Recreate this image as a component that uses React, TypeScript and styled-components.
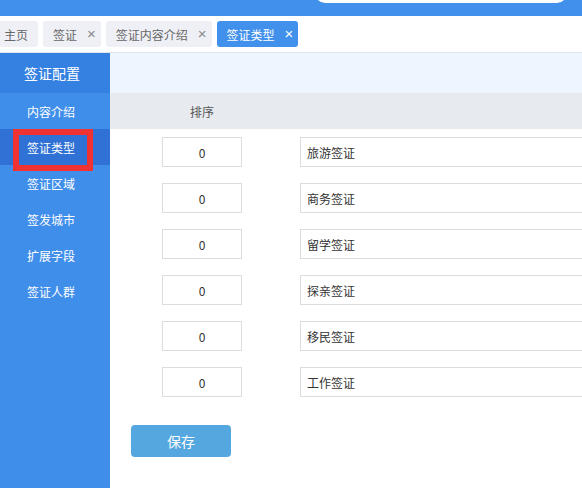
import React from 'react'
import styled, { createGlobalStyle } from 'styled-components'

const GlobalStyle = createGlobalStyle`
  html, body {
    margin: 0;
    padding: 0;
    background: #fff;
    font-family: "Noto Sans CJK SC", "Liberation Sans", sans-serif;
    overflow: hidden;
  }
`

const Page = styled.div`
  width: 582px;
  height: 488px;
  display: flex;
  flex-direction: column;
  position: relative;
  overflow: hidden;
`

const TopBar = styled.div`
  height: 16px;
  flex: none;
  background: #4190eb;
  display: flex;
  align-items: flex-start;
  overflow: hidden;
`

const TopTitle = styled.div`
  margin: -18px 0 0 10px;
  width: 240px;
  font-size: 15px;
  line-height: 18px;
  font-weight: bold;
  color: #5a6270;
  white-space: nowrap;
  overflow: hidden;
`

const Search = styled.div`
  margin: -20px 0 0 65px;
  width: 252px;
  height: 23px;
  background: #fff;
  border-radius: 0 0 10px 10px;
`

const TabBar = styled.div`
  flex: none;
  display: flex;
  align-items: center;
  gap: 5px;
  border-bottom: 1px solid #dfe4ed;
  box-sizing: border-box;
  height: 37px;
`

const Tab = styled.div<{ active?: boolean; first?: boolean }>`
  height: 26px;
  display: flex;
  align-items: center;
  gap: 10px;
  padding-left: 10px;
  margin-left: ${({ first }) => (first ? '-6px' : '0')};
  padding-right: ${({ first }) => (first ? '10px' : '5px')};
  border-radius: 3px;
  font-size: 12px;
  background: ${({ active }) => (active ? '#4190eb' : '#eff0f6')};
  color: ${({ active }) => (active ? '#fff' : '#666')};
`

const Close = styled.span<{ active?: boolean }>`
  font-family: "Liberation Sans", sans-serif;
  font-size: 15px;
  line-height: 26px;
  color: ${({ active }) => (active ? '#fff' : '#888')};
`

const Body = styled.div`
  flex: 1;
  display: flex;
`

const Sidebar = styled.div`
  width: 110px;
  flex: none;
  background: #3f8eea;
  display: flex;
  flex-direction: column;
`

const SideHead = styled.div`
  height: 40px;
  background: #3581e2;
  color: #fff;
  font-size: 14px;
  display: flex;
  align-items: center;
  padding-left: 24px;
`

const SideItem = styled.div<{ active?: boolean }>`
  height: 36px;
  display: flex;
  align-items: center;
  padding-left: 27px;
  color: #fff;
  font-size: 12px;
  background: ${({ active }) => (active ? '#2f71d5' : 'transparent')};
`

const Main = styled.div`
  flex: 1;
  display: flex;
  flex-direction: column;
  min-width: 0;
`

const TopBand = styled.div`
  height: 40px;
  background: #eef5fe;
`

const TableHead = styled.div`
  height: 36px;
  background: #e7eaef;
  display: grid;
  grid-template-columns: 184px 1fr;
  align-items: center;
  font-size: 12px;
  color: #555;
`

const HeadCell = styled.div`
  text-align: center;
`

const Rows = styled.div`
  padding-top: 8px;
  display: flex;
  flex-direction: column;
  gap: 16px;
`

const Row = styled.div`
  display: grid;
  grid-template-columns: 184px 1fr;
  align-items: center;
`

const Field = styled.div<{ center?: boolean }>`
  height: 30px;
  box-sizing: border-box;
  border: 1px solid #dcdcdc;
  font-size: 12px;
  color: #333;
  display: flex;
  align-items: center;
  justify-content: ${({ center }) => (center ? 'center' : 'flex-start')};
  padding-left: ${({ center }) => (center ? '0' : '6px')};
`

const SortField = styled(Field)`
  width: 80px;
  justify-self: center;
`

const NameField = styled(Field)`
  width: 400px;
  margin-left: 6px;
`

const Footer = styled.div`
  padding: 28px 0 0 21px;
`

const SaveButton = styled.button`
  width: 100px;
  height: 32px;
  border: none;
  border-radius: 4px;
  background: #55a7df;
  color: #fff;
  font-size: 14px;
  font-family: inherit;
`

const Marker = styled.div`
  position: absolute;
  left: 13px;
  top: 129px;
  width: 80px;
  height: 42px;
  box-sizing: border-box;
  border: 6px solid #f03232;
`

const tabs = [
  { label: '主页', closable: false },
  { label: '签证', closable: true },
  { label: '签证内容介绍', closable: true },
  { label: '签证类型', closable: true, active: true },
]

const menu = ['内容介绍', '签证类型', '签证区域', '签发城市', '扩展字段', '签证人群']

const types = ['旅游签证', '商务签证', '留学签证', '探亲签证', '移民签证', '工作签证']

export default function App() {
  return (
    <Page>
      <GlobalStyle />
      <TopBar>
        <TopTitle>旅游签证管理后台系统管理平台</TopTitle>
        <Search />
      </TopBar>
      <TabBar>
        {tabs.map((t, i) => (
          <Tab key={t.label} active={t.active} first={i === 0}>
            {t.label}
            {t.closable && <Close active={t.active}>×</Close>}
          </Tab>
        ))}
      </TabBar>
      <Body>
        <Sidebar>
          <SideHead>签证配置</SideHead>
          {menu.map((m) => (
            <SideItem key={m} active={m === '签证类型'}>
              {m}
            </SideItem>
          ))}
        </Sidebar>
        <Main>
          <TopBand />
          <TableHead>
            <HeadCell>排序</HeadCell>
            <div />
          </TableHead>
          <Rows>
            {types.map((t) => (
              <Row key={t}>
                <SortField center>0</SortField>
                <NameField>{t}</NameField>
              </Row>
            ))}
          </Rows>
          <Footer>
            <SaveButton>保存</SaveButton>
          </Footer>
        </Main>
      </Body>
      <Marker />
    </Page>
  )
}
